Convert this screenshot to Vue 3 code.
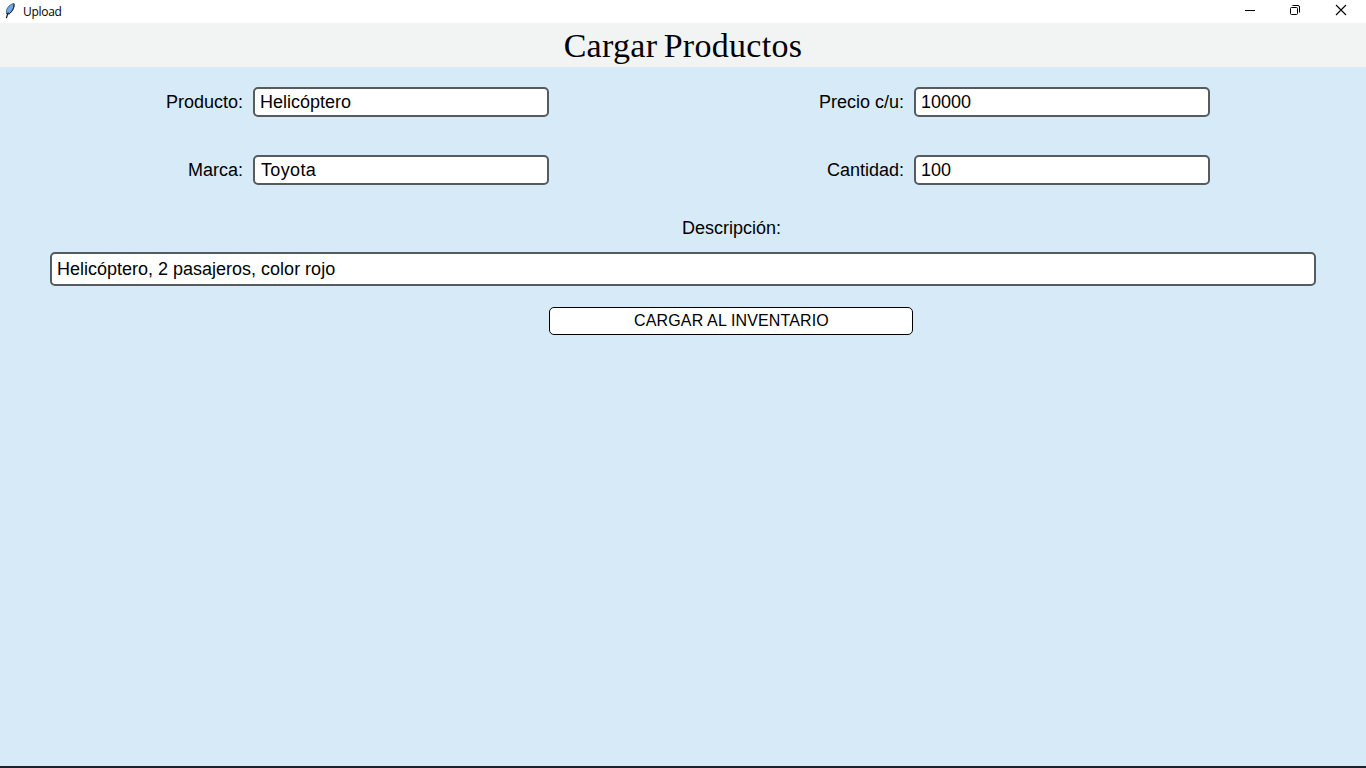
<script setup>
import { ref } from 'vue'

const producto = ref('Helicóptero')
const precio = ref('10000')
const marca = ref('Toyota')
const cantidad = ref('100')
const descripcion = ref('Helicóptero, 2 pasajeros, color rojo')
</script>

<template>
  <main class="window">
    <div class="titlebar">
      <svg class="feather" width="12" height="18" viewBox="0 0 12 18">
        <path d="M2.6 13C1.6 8.6 4.2 4 9.6 2.5C10.6 5.4 8.8 9.8 5 13Z" fill="#6fa8ea" stroke="#2a3442" stroke-width="0.7" />
        <path d="M9.9 2.5C10.8 5.6 9 9.8 5 13.2" fill="none" stroke="#101418" stroke-width="1" />
        <path d="M2.4 17.2C2.8 15 3.4 13.4 4.4 11.5" fill="none" stroke="#101418" stroke-width="1.2" />
      </svg>
      <span class="caption">Upload</span>
      <div class="controls">
        <svg width="46" height="22" viewBox="0 0 46 22" shape-rendering="crispEdges">
          <path d="M16 10.5H26" stroke="#000" />
        </svg>
        <svg width="46" height="22" viewBox="0 0 46 22">
          <rect x="16.5" y="7.5" width="7" height="7" rx="1" fill="none" stroke="#000" />
          <path d="M18.5 5.5H24Q25.5 5.5 25.5 7V12.5" fill="none" stroke="#000" />
        </svg>
        <svg width="46" height="22" viewBox="0 0 46 22">
          <path d="M16 5L26 15M26 5L16 15" stroke="#000" stroke-width="1.1" />
        </svg>
      </div>
    </div>
    <header class="heading"><h1>Cargar Productos</h1></header>
    <form class="form" @submit.prevent>
      <div class="fields">
        <label for="producto">Producto:</label>
        <input id="producto" v-model="producto" />
        <label for="precio">Precio c/u:</label>
        <input id="precio" v-model="precio" />
        <label for="marca">Marca:</label>
        <input id="marca" v-model="marca" class="marca" />
        <label for="cantidad">Cantidad:</label>
        <input id="cantidad" v-model="cantidad" />
      </div>
      <label class="desc-label" for="descripcion">Descripción:</label>
      <input id="descripcion" v-model="descripcion" class="desc" />
      <button type="submit">CARGAR AL INVENTARIO</button>
    </form>
  </main>
</template>

<style>
body { margin: 0; }
</style>

<style scoped>
.window {
  box-sizing: border-box;
  height: 768px;
  display: flex;
  flex-direction: column;
  background: #d6eaf8;
  border-bottom: 2px solid #1d222b;
  font-family: "Liberation Sans", Arial, sans-serif;
  color: #000;
  overflow: hidden;
}
.titlebar {
  height: 23px;
  flex: none;
  display: flex;
  align-items: flex-start;
  background: #fff;
}
.feather { margin: 1px 0 0 4px; }
.caption {
  margin-left: 7px;
  font: 12px/23px "Open Sans", sans-serif;
  letter-spacing: -0.3px;
}
.controls { margin-left: auto; display: flex; margin-right: 1px; }
.controls svg { display: block; margin-right: -1px; }
.controls svg:nth-child(2) { margin-right: 0; }
.heading {
  height: 44px;
  flex: none;
  display: flex;
  justify-content: center;
  background: #f2f4f4;
}
h1 {
  margin: 0;
  font: 400 34px/45px "Palatino Linotype", "Liberation Serif", serif;
  letter-spacing: 0.3px;
  word-spacing: -2.5px;
  white-space: nowrap;
}
.form {
  display: flex;
  flex-direction: column;
  font-size: 18px;
}
.fields {
  display: grid;
  grid-template-columns: 243px 296px 345px 296px;
  column-gap: 10px;
  row-gap: 38px;
  padding-top: 20px;
}
label {
  line-height: 30px;
  text-align: right;
  white-space: nowrap;
}
input {
  box-sizing: border-box;
  height: 30px;
  width: 100%;
  padding: 0 5px;
  border: 2px solid #565b5e;
  border-radius: 5px;
  background: #fff;
  color: #000;
  font: 18px "Liberation Sans", Arial, sans-serif;
  outline: none;
}
.marca {
  padding-left: 6px;
  letter-spacing: 0.35px;
}
.desc-label {
  width: 98px;
  margin: 28px 0 0 682px;
}
.desc {
  width: 1266px;
  height: 34px;
  margin: 9px 0 0 50px;
}
button {
  width: 364px;
  height: 28px;
  margin: 21px 0 0 549px;
  padding: 0 0 0 1px;
  border: 1px solid #000;
  border-radius: 5px;
  background: #fff;
  color: #000;
  font: 16px/24px "Liberation Sans", Arial, sans-serif;
  letter-spacing: 0.14px;
}
</style>
